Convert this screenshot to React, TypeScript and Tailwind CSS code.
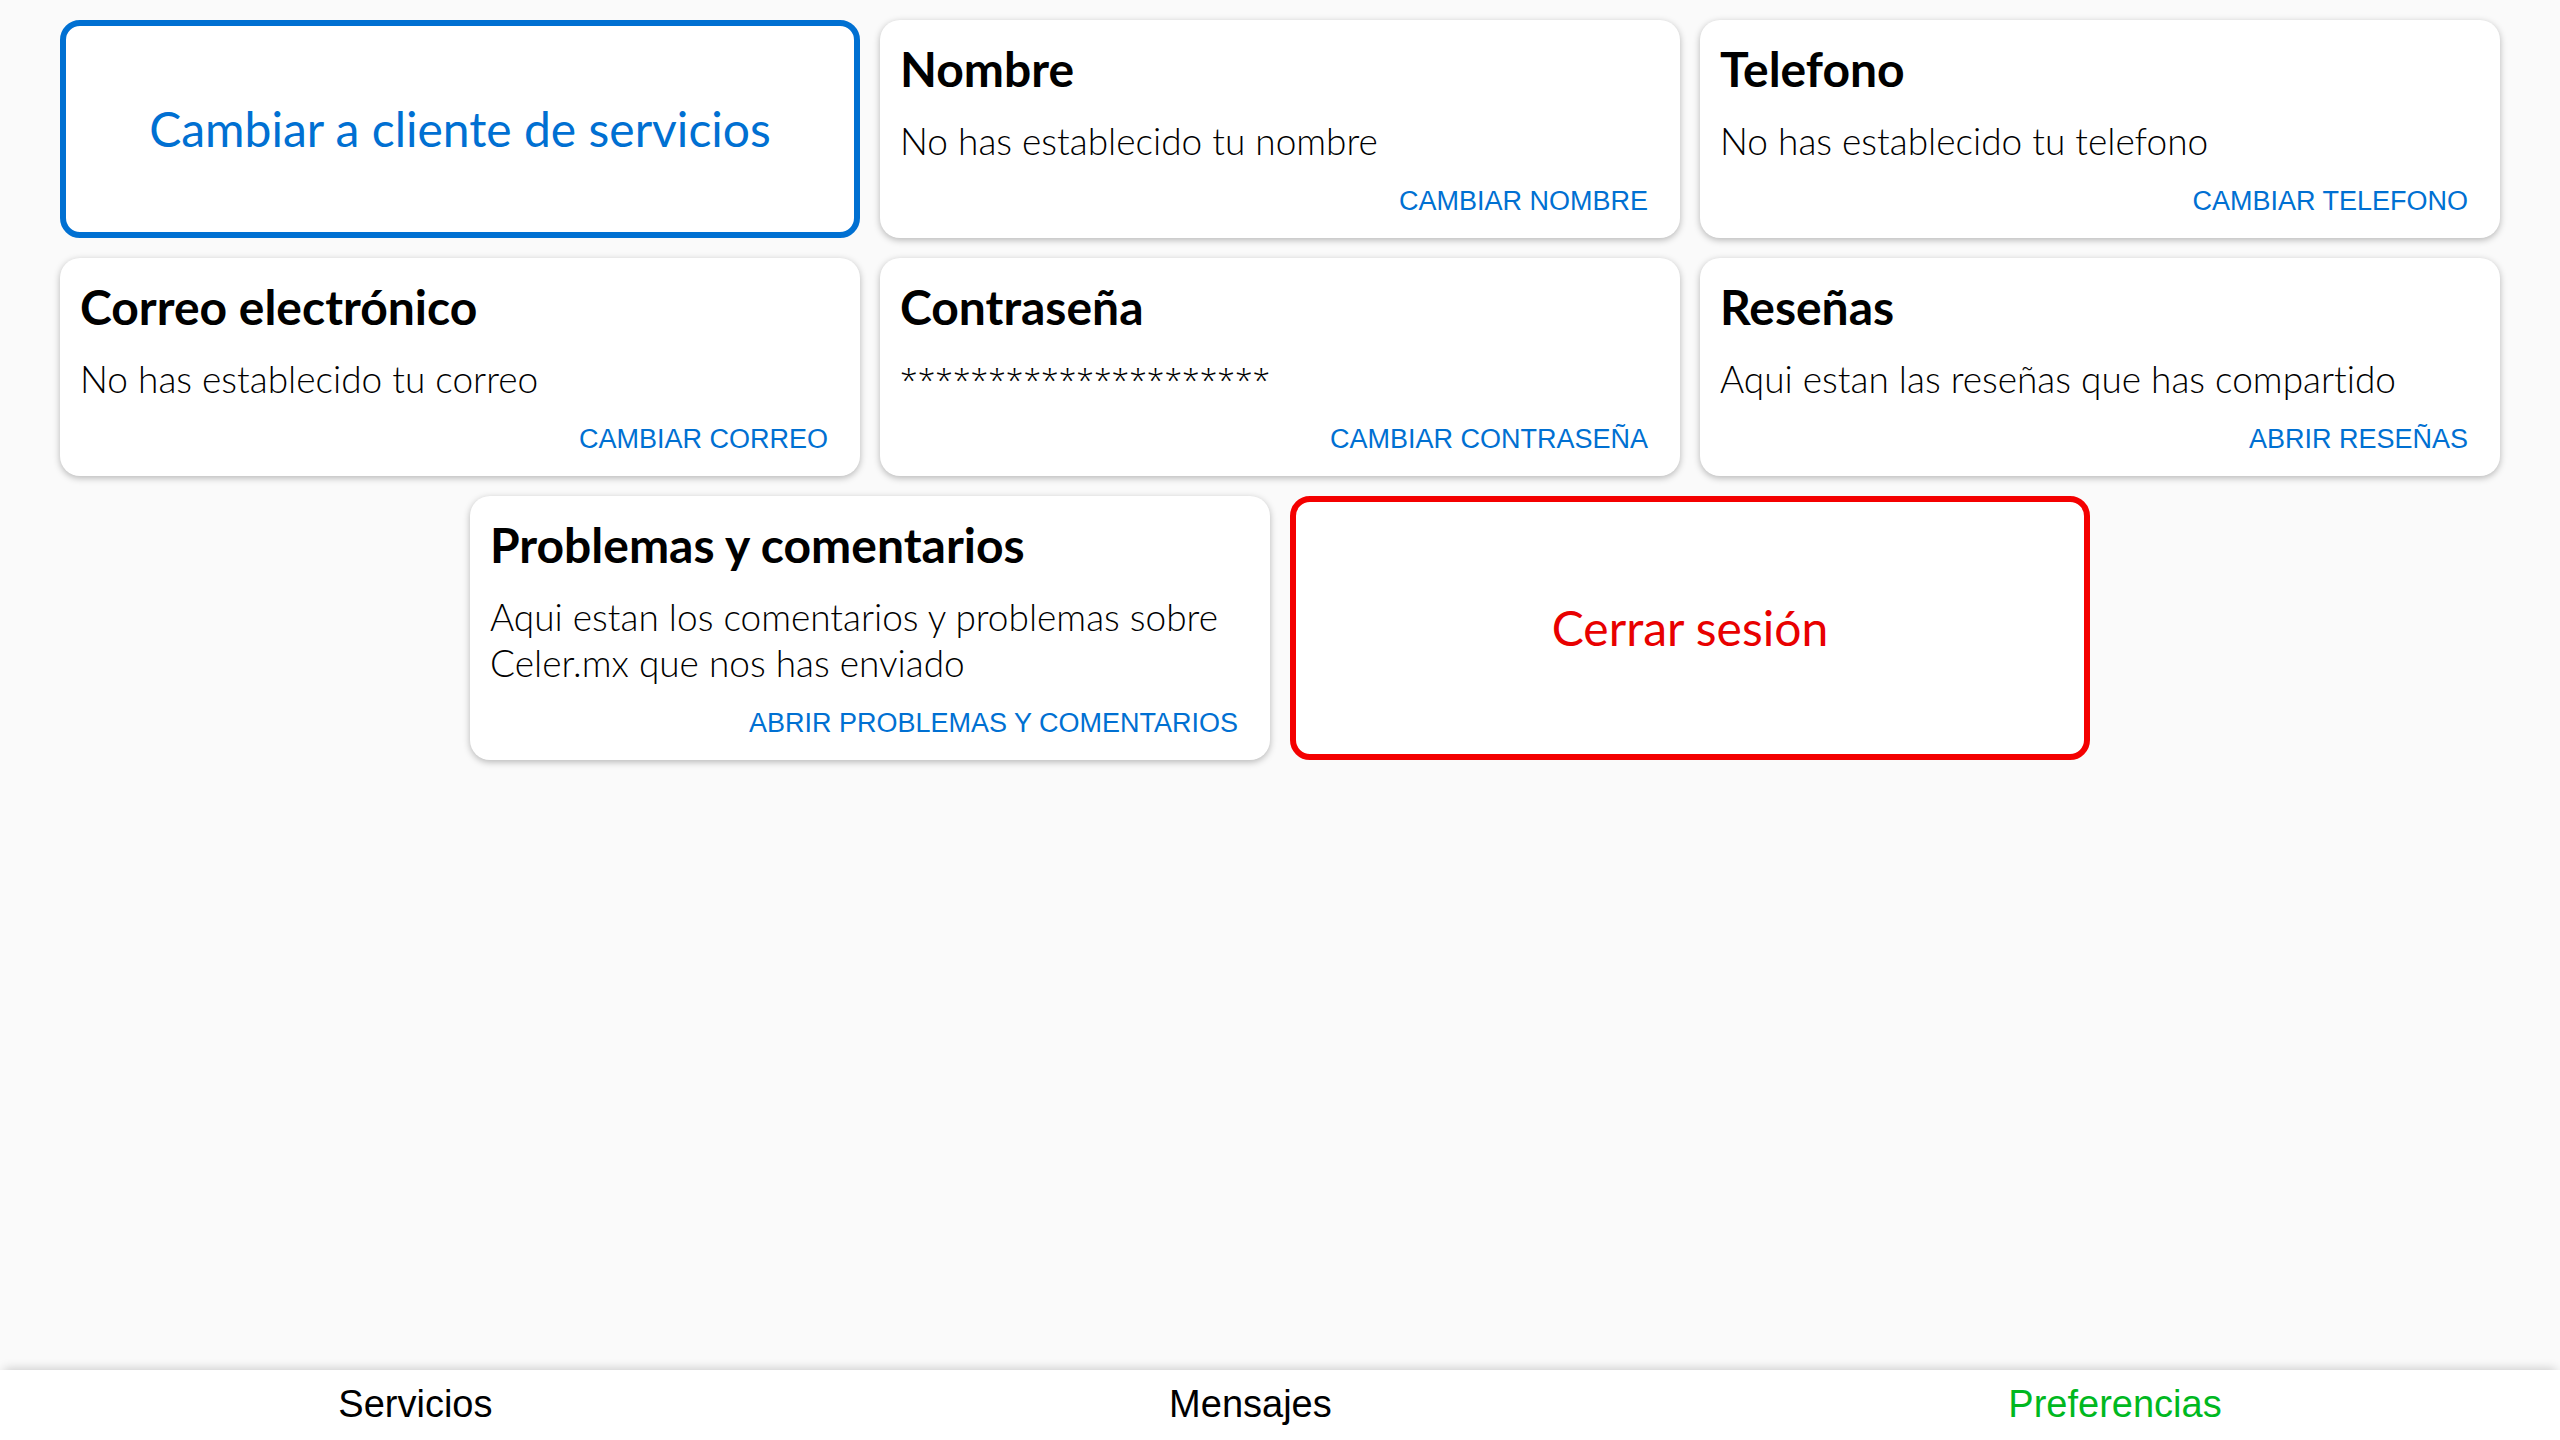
type Setting = { title: string; text: string; action: string; masked?: boolean };

const settings: Setting[] = [
  { title: 'Nombre', text: 'No has establecido tu nombre', action: 'CAMBIAR NOMBRE' },
  { title: 'Telefono', text: 'No has establecido tu telefono', action: 'CAMBIAR TELEFONO' },
  { title: 'Correo electrónico', text: 'No has establecido tu correo', action: 'CAMBIAR CORREO' },
  { title: 'Contraseña', text: '*********************', action: 'CAMBIAR CONTRASEÑA', masked: true },
  { title: 'Reseñas', text: 'Aqui estan las reseñas que has compartido', action: 'ABRIR RESEÑAS' },
  {
    title: 'Problemas y comentarios',
    text: 'Aqui estan los comentarios y problemas sobre Celer.mx que nos has enviado',
    action: 'ABRIR PROBLEMAS Y COMENTARIOS',
  },
];

function SettingCard({ title, text, action, masked }: Setting) {
  const textStyle = masked ? "font-['Open_Sans',sans-serif] text-[32px]" : 'text-[37px]';
  return (
    <section className="flex w-[calc((100%-40px)/3)] flex-col rounded-[20px] bg-white px-5 pt-5 pb-3.5 shadow-[0_2px_7px_rgba(0,0,0,0.28)]">
      <h2 className="text-[48px] leading-[58px] font-bold">{title}</h2>
      <p className={`mt-5 leading-[46px] font-light ${textStyle}`}>{text}</p>
      <button
        type="button"
        className="mt-3.5 cursor-pointer self-end px-3 py-2 font-['Liberation_Sans',sans-serif] text-[27px] leading-[30px] text-[#0070d2]"
      >
        {action}
      </button>
    </section>
  );
}

function ActionCard({ label, tone }: { label: string; tone: 'blue' | 'red' }) {
  const color = tone === 'blue' ? 'border-[#0070d2] text-[#0070d2]' : 'border-[#f40000] text-[#e80000]';
  return (
    <button
      type="button"
      className={`w-[calc((100%-40px)/3)] cursor-pointer rounded-[20px] border-6 bg-white text-[48px] leading-[58px] ${color}`}
    >
      {label}
    </button>
  );
}

const tabs = [
  { label: 'Servicios', active: false },
  { label: 'Mensajes', active: false },
  { label: 'Preferencias', active: true },
];

export default function App() {
  return (
    <div className="flex min-h-screen flex-col bg-[#fafafa] font-[Lato,sans-serif] text-black [font-variant-ligatures:no-common-ligatures]">
      <main className="flex flex-1 flex-wrap content-start justify-center gap-5 px-15 py-5">
        <ActionCard label="Cambiar a cliente de servicios" tone="blue" />
        {settings.map((setting) => (
          <SettingCard key={setting.title} {...setting} />
        ))}
        <ActionCard label="Cerrar sesión" tone="red" />
      </main>
      <nav className="sticky bottom-0 flex justify-around bg-white pt-3 pb-3.5 font-['Liberation_Sans',sans-serif] text-[38px] leading-[44px] shadow-[0_-5px_10px_-4px_rgba(0,0,0,0.2)]">
        {tabs.map(({ label, active }) => (
          <a
            key={label}
            href={`#${label.toLowerCase()}`}
            aria-current={active ? 'page' : undefined}
            className={active ? 'text-[#00b81f]' : 'text-black'}
          >
            {label}
          </a>
        ))}
      </nav>
    </div>
  );
}
